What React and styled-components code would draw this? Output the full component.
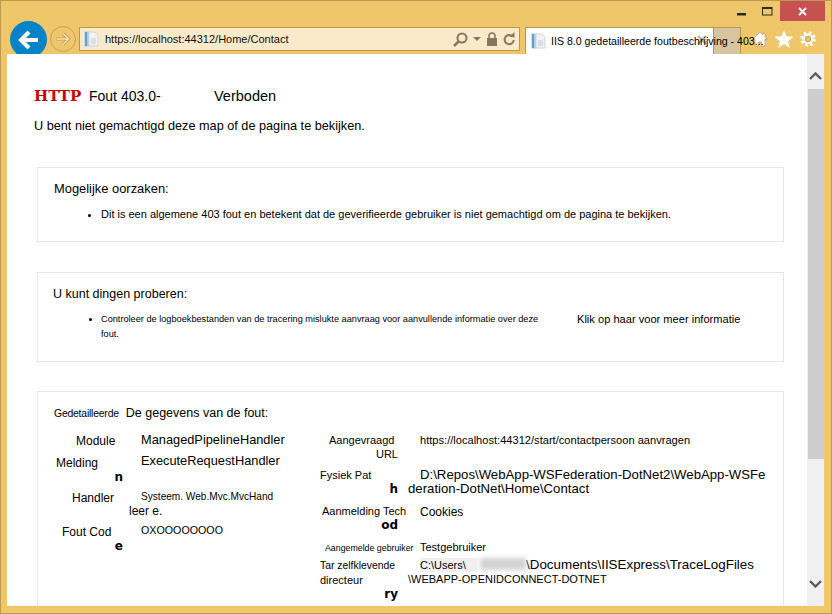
import React from 'react';
import styled, { createGlobalStyle } from 'styled-components';

const Global = createGlobalStyle`
  html, body { margin: 0; padding: 0; height: 100%; overflow: hidden; }
  body { font-family: "Liberation Sans", Arial, sans-serif; color: #000; }
  #root { height: 100%; }
`;

const Frame = styled.div`
  width: 832px;
  height: 614px;
  box-sizing: border-box;
  background: #efc66a;
  border: 1px solid #b99b50;
  padding: 0 7px 7px 6px;
  display: flex;
  flex-direction: column;
`;

const TitleBar = styled.div`
  height: 20px;
  display: flex;
  justify-content: flex-end;
  margin-right: -1px;
`;

const WinButton = styled.div`
  width: ${p => p.$w || 26}px;
  height: 20px;
  background: ${p => p.$bg || 'transparent'};
  display: flex;
  align-items: center;
  justify-content: center;
`;

const Toolbar = styled.div`
  height: 33px;
  display: flex;
  align-items: flex-start;
  overflow: hidden;
  position: relative;
  margin-left: -6px;
  padding-left: 9px;
`;

const BackButton = styled.div`
  width: 37px;
  height: 37px;
  flex: none;
  border-radius: 50%;
  background: #0484c6;
  display: flex;
  align-items: center;
  justify-content: center;
`;

const ForwardButton = styled.div`
  width: 26px;
  height: 26px;
  flex: none;
  margin: 5px 0 0 3px;
  box-sizing: border-box;
  border-radius: 50%;
  border: 1px solid #c6a25c;
  display: flex;
  align-items: center;
  justify-content: center;
`;

const AddressBar = styled.div`
  width: 441px;
  height: 24px;
  flex: none;
  box-sizing: border-box;
  margin: 6px 0 0 3px;
  background: #faeaca;
  border: 1px solid #b8974f;
  display: flex;
  align-items: center;
  padding: 0 4px 0 4px;
  gap: 5px;
`;

const Url = styled.span`
  font-size: 11px;
  flex: 1;
  color: #111;
`;

const AddressTools = styled.div`
  display: flex;
  align-items: center;
  gap: 5px;
`;

const Tab = styled.div`
  width: 188px;
  height: 28px;
  flex: none;
  box-sizing: border-box;
  margin: 6px 0 0 5px;
  background: #fff;
  border: 1px solid #b8974f;
  border-bottom: none;
  border-right: none;
  display: flex;
  align-items: center;
  padding: 0 0 2px 5px;
  gap: 4px;
  position: relative;
`;

const TabTitle = styled.span`
  font-size: 10.6px;
  white-space: nowrap;
  position: relative;
  z-index: 2;
`;

const TabClose = styled.span`
  position: absolute;
  right: 5px;
  top: 4px;
  font-size: 14px;
  font-weight: bold;
  color: #a9a9a9;
  line-height: 16px;
`;

const NewTab = styled.div`
  width: 28px;
  height: 28px;
  flex: none;
  box-sizing: border-box;
  margin-top: 6px;
  background: #d6c59f;
  border: 1px solid #b8974f;
  border-bottom: none;
`;

const ToolIcons = styled.div`
  display: flex;
  flex: none;
  align-items: center;
  gap: 6px;
  margin: 9px 0 0 11px;
`;

const Body = styled.div`
  flex: 1;
  min-height: 0;
  display: flex;
  background: #fff;
`;

const Page = styled.div`
  flex: 1;
  min-width: 0;
  overflow: hidden;
  padding: 33px 23px 0 30px;
  background: #fff;
`;

const Heading = styled.div`
  display: flex;
  align-items: baseline;
  height: 26px;
`;

const Http = styled.span`
  font-family: "DejaVu Serif", serif;
  font-weight: bold;
  font-size: 15px;
  color: #cc0000;
  width: 55px;
  margin-left: -3px;
`;

const FoutCode = styled.span`
  font-size: 14px;
  width: 125px;
`;

const Verboden = styled.span`
  font-size: 14.5px;
`;

const Intro = styled.div`
  font-size: 12.7px;
  margin: 5px 0 33px -3px;
  line-height: 16px;
`;

const Panel = styled.section`
  box-sizing: border-box;
  height: ${p => p.$h}px;
  border: 1px solid #e6e6e6;
  margin-bottom: ${p => p.$mb || 0}px;
  padding: ${p => p.$pt}px 16px 0 ${p => p.$pl || 16}px;
`;

const PanelTitle = styled.div`
  font-size: ${p => p.$size}px;
  line-height: 16px;
`;

const BulletRow = styled.div`
  display: flex;
  margin: ${p => p.$mt}px 0 0 ${p => p.$ml}px;
`;

const BulletList = styled.ul`
  margin: 0;
  padding: 0;
  list-style: disc;
  font-size: ${p => p.$size}px;
  line-height: ${p => p.$lh}px;
  width: ${p => p.$w}px;
  flex: none;
`;

const MoreInfo = styled.span`
  font-size: 11.1px;
  line-height: 14px;
  margin-left: 32px;
`;

const DetailTitle = styled.div`
  display: flex;
  align-items: baseline;
  gap: 7px;
  font-size: 12.5px;
  line-height: 16px;
`;

const SmallWord = styled.span`
  font-size: 10.4px;
  letter-spacing: -0.2px;
`;

const Columns = styled.div`
  display: flex;
  margin-top: 11px;
`;

const Column = styled.div`
  width: ${p => p.$w}px;
  flex: none;
  display: flex;
  flex-direction: column;
`;

const Row = styled.div`
  display: grid;
  grid-template-columns: ${p => p.$label}px 1fr;
  column-gap: ${p => p.$gap}px;
  height: ${p => p.$h}px;
`;

const Label = styled.div`
  font-size: ${p => p.$size || 11}px;
  line-height: 14px;
  padding-left: ${p => p.$pl || 0}px;
  padding-top: ${p => p.$pt || 0}px;
  text-align: ${p => p.$right ? 'right' : 'left'};
  white-space: nowrap;
`;

const Tail = styled.div`
  font-family: "DejaVu Sans", sans-serif;
  font-weight: bold;
  font-size: 12px;
  line-height: 14px;
  text-align: right;
`;

const Value = styled.div`
  font-size: ${p => p.$size || 12}px;
  line-height: ${p => p.$lh || 14}px;
  text-indent: 12px;
  white-space: nowrap;
  margin-top: ${p => p.$mt || 0}px;
`;

const Piece = styled.span`
  font-size: ${p => p.$size}px;
`;

const Blurred = styled.span`
  display: inline-block;
  width: 46px;
  height: 12px;
  vertical-align: -1px;
  margin-left: 3px;
  background: #d2d2d2;
  filter: blur(2.5px);
`;

const Gray = styled.span`
  display: inline-block;
  width: 57px;
  text-indent: 0;
  font-size: 11px;
  background: #f0f0f0;
`;

const Scrollbar = styled.div`
  width: 17px;
  flex: none;
  background: #f0f0f0;
  display: flex;
  flex-direction: column;
  align-items: center;
`;

const ScrollArrow = styled.div`
  height: 35px;
  box-sizing: border-box;
  padding: ${p => p.$up ? '9px 0 0' : '0 0 9px'};
  flex: none;
  display: flex;
  align-items: center;
  justify-content: center;
`;

const Thumb = styled.div`
  width: 16px;
  height: 370px;
  flex: none;
  background: #cdcdcd;
`;

const Spacer = styled.div`
  flex: 1;
`;

const IconSvg = styled.svg`
  flex: none;
  display: block;
`;

const DocIcon = () => (
  <IconSvg width="16" height="16" viewBox="0 0 16 16">
    <rect x="0.5" y="0.5" width="5" height="15" fill="#a9cbe6" />
    <rect x="1" y="1" width="2" height="14" fill="#5fa0d6" />
    <path d="M5 1h6l3 3v11H5z" fill="#f0f2f5" stroke="#d2d6dc" />
    <path d="M7 8h5M7 10h5M7 12h5" stroke="#c6ccd3" />
  </IconSvg>
);

const Search = () => (
  <IconSvg width="15" height="15" viewBox="0 0 15 15" fill="none" stroke="#85795d" strokeWidth="2">
    <circle cx="9" cy="6" r="4.5" />
    <path d="M5.5 9.5L1 14" strokeWidth="2.5" />
  </IconSvg>
);

const Caret = () => (
  <IconSvg width="8" height="5" viewBox="0 0 8 5"><path d="M0 0h8L4 4z" fill="#85795d" /></IconSvg>
);

const Lock = () => (
  <IconSvg width="12" height="14" viewBox="0 0 12 14">
    <path d="M3 6V4a3 3 0 016 0v2" fill="none" stroke="#85795d" strokeWidth="1.6" />
    <rect x="1" y="6" width="10" height="8" fill="#85795d" />
  </IconSvg>
);

const Refresh = () => (
  <IconSvg width="12" height="14" viewBox="0 0 12 14" fill="none">
    <path d="M8.5 3.6A4.6 4.6 0 1 0 10.8 8" stroke="#85795d" strokeWidth="2" />
    <path d="M6.5 4.8L11.5 5.5 11.5 0z" fill="#85795d" />
  </IconSvg>
);

const Home = () => (
  <IconSvg width="16" height="16" viewBox="0 0 16 16">
    <path d="M8 1L.7 8h2.3v7h3.5v-4h3v4h3.5V8h2.3l-2.3-2.2V2h-2v1.9z" fill="#fff" stroke="#a48a50" strokeWidth="0.6" />
  </IconSvg>
);

const Star = () => (
  <IconSvg width="20" height="18" viewBox="0 0 20 18">
    <path d="M10 0l2.5 6.3 7 .5-5.4 4.4 1.8 6.8L10 14.2l-5.9 3.8 1.8-6.8L.5 6.8l7-.5z" fill="#fff" />
  </IconSvg>
);

const Gear = () => (
  <IconSvg width="16" height="16" viewBox="0 0 16 16" fill="none">
    <circle cx="8" cy="8" r="4.2" stroke="#fff" strokeWidth="2.4" />
    <circle cx="8" cy="8" r="6.3" stroke="#fff" strokeWidth="3" strokeDasharray="2.47 2.47" />
    <circle cx="8" cy="8" r="2.7" stroke="#a48a50" strokeWidth="0.7" />
  </IconSvg>
);

const leftRows = [
  { h: 21, label: 'Module', pl: 22, pt: 1, value: 'ManagedPipelineHandler', size: 12.8 },
  { h: 35, label: 'Melding', pl: 2, pt: 2, tail: 'n', value: 'ExecuteRequestHandler', size: 12.8 },
  { h: 34, label: 'Handler', pl: 18, pt: 2, value: <><Piece $size={10.1}>Systeem. Web.Mvc.MvcHand</Piece><br />leer e.</>, lh: 15 },
  { h: 40, label: 'Fout Cod', pl: 8, pt: 2, tail: 'e', value: 'OXOOOOOOOO', size: 10.7 },
];

const rightRows = [
  { h: 35, label: 'Aangevraagd', pl: 9, second: 'URL', value: 'https://localhost:44312/start/contactpersoon aanvragen', size: 11.1 },
  { h: 36, label: 'Fysiek Pat', tail: 'h', value: <>D:\Repos\WebApp-WSFederation-DotNet2\WebApp-WSFe<br />deration-DotNet\Home\Contact</>, size: 13.2 },
  { h: 35, label: 'Aanmelding Tech', pl: 2, tail: 'od', value: 'Cookies', mt: 1 },
  { h: 19, label: 'Aangemelde gebruiker', pl: 5, labelSize: 8.8, pt: 2, value: 'Testgebruiker', size: 11, mt: 1 },
];

function DetailRow({ row, labelWidth, gap, labelSize }) {
  return (
    <Row $label={labelWidth} $gap={gap} $h={row.h}>
      <div>
        <Label $pl={row.pl} $pt={row.pt} $size={row.labelSize || labelSize}>{row.label}</Label>
        {row.second && <Label $right>{row.second}</Label>}
        {row.tail && <Tail>{row.tail}</Tail>}
      </div>
      <Value $size={row.size} $lh={row.lh} $mt={row.mt}>{row.value}</Value>
    </Row>
  );
}

export default function App() {
  return (
    <Frame>
      <Global />
      <TitleBar>
        <WinButton>
          <svg width="9" height="9"><rect width="9" height="2.5" y="6" fill="#2b2b2b" /></svg>
        </WinButton>
        <WinButton>
          <svg width="11" height="9"><rect x="0.5" y="0.5" width="9.5" height="7.5" fill="none" stroke="#2b2b2b" strokeWidth="1" /><rect width="10" height="2" fill="#2b2b2b" /></svg>
        </WinButton>
        <WinButton $w={45} $bg="#c75050">
          <svg width="9" height="9" viewBox="0 0 9 9"><path d="M1 1l7 7M8 1L1 8" stroke="#fff" strokeWidth="1.8" /></svg>
        </WinButton>
      </TitleBar>
      <Toolbar>
        <BackButton>
          <svg width="22" height="20" viewBox="0 0 22 20" fill="none" stroke="#fff" strokeWidth="4">
            <path d="M20 10H4M11 2L3 10l8 8" />
          </svg>
        </BackButton>
        <ForwardButton>
          <svg width="16" height="14" viewBox="0 0 16 14" fill="none">
            <path d="M1 7h12M8 1.5L13.5 7 8 12.5" stroke="#c6a25c" strokeWidth="3.2" />
            <path d="M1.5 7h11.5M8 1.5L13.5 7 8 12.5" stroke="#f7e4b4" strokeWidth="1.3" />
          </svg>
        </ForwardButton>
        <AddressBar>
          <DocIcon />
          <Url>https://localhost:44312/Home/Contact</Url>
          <AddressTools>
            <Search />
            <Caret />
            <Lock />
            <Refresh />
          </AddressTools>
        </AddressBar>
        <Tab>
          <DocIcon />
          <TabTitle>IIS 8.0 gedetailleerde foutbeschrijving - 403...</TabTitle>
          <TabClose>✕</TabClose>
        </Tab>
        <NewTab />
        <ToolIcons>
          <Home />
          <Star />
          <Gear />
        </ToolIcons>
      </Toolbar>
      <Body>
        <Page>
          <Heading>
            <Http>HTTP</Http>
            <FoutCode>Fout 403.0-</FoutCode>
            <Verboden>Verboden</Verboden>
          </Heading>
          <Intro>U bent niet gemachtigd deze map of de pagina te bekijken.</Intro>
          <Panel $h={75} $mb={30} $pt={13}>
            <PanelTitle $size={12.9}>Mogelijke oorzaken:</PanelTitle>
            <BulletRow $mt={10} $ml={47}>
              <BulletList $size={11} $lh={14} $w={660}>
                <li>Dit is een algemene 403 fout en betekent dat de geverifieerde gebruiker is niet gemachtigd om de pagina te bekijken.</li>
              </BulletList>
            </BulletRow>
          </Panel>
          <Panel $h={90} $mb={29} $pt={13} $pl={15}>
            <PanelTitle $size={12.5}>U kunt dingen proberen:</PanelTitle>
            <BulletRow $mt={10} $ml={48}>
              <BulletList $size={9.2} $lh={15} $w={444}>
                <li>Controleer de logboekbestanden van de tracering mislukte aanvraag voor aanvullende informatie over deze fout.</li>
              </BulletList>
              <MoreInfo>Klik op haar voor meer informatie</MoreInfo>
            </BulletRow>
          </Panel>
          <Panel $h={230} $pt={13}>
            <DetailTitle>
              <SmallWord>Gedetailleerde</SmallWord>
              <span>De gegevens van de fout:</span>
            </DetailTitle>
            <Columns>
              <Column $w={266}>
                {leftRows.map(row => <DetailRow key={row.label} row={row} labelWidth={69} gap={6} labelSize={12} />)}
              </Column>
              <Column $w={446}>
                {rightRows.map(row => <DetailRow key={row.label} row={row} labelWidth={78} gap={10} labelSize={11} />)}
                <Row $label={78} $gap={10} $h={50}>
                  <div>
                    <Label $size={10.4} $pt={1}>Tar zelfklevende</Label>
                    <Label>directeur</Label>
                    <Tail>ry</Tail>
                  </div>
                  <Value $size={13.4}>
                    <Gray>C:\Users\</Gray><Blurred />\Documents\IISExpress\TraceLogFiles<br />
                    <Piece $size={11}>\WEBAPP-OPENIDCONNECT-DOTNET</Piece>
                  </Value>
                </Row>
              </Column>
            </Columns>
          </Panel>
        </Page>
        <Scrollbar>
          <ScrollArrow $up>
            <svg width="13" height="8" viewBox="0 0 13 8" fill="none" stroke="#5c5c5c" strokeWidth="2.4"><path d="M1 7l5.5-5.5L12 7" /></svg>
          </ScrollArrow>
          <Thumb />
          <Spacer />
          <ScrollArrow>
            <svg width="13" height="8" viewBox="0 0 13 8" fill="none" stroke="#5c5c5c" strokeWidth="2.4"><path d="M1 1l5.5 5.5L12 1" /></svg>
          </ScrollArrow>
        </Scrollbar>
      </Body>
    </Frame>
  );
}
